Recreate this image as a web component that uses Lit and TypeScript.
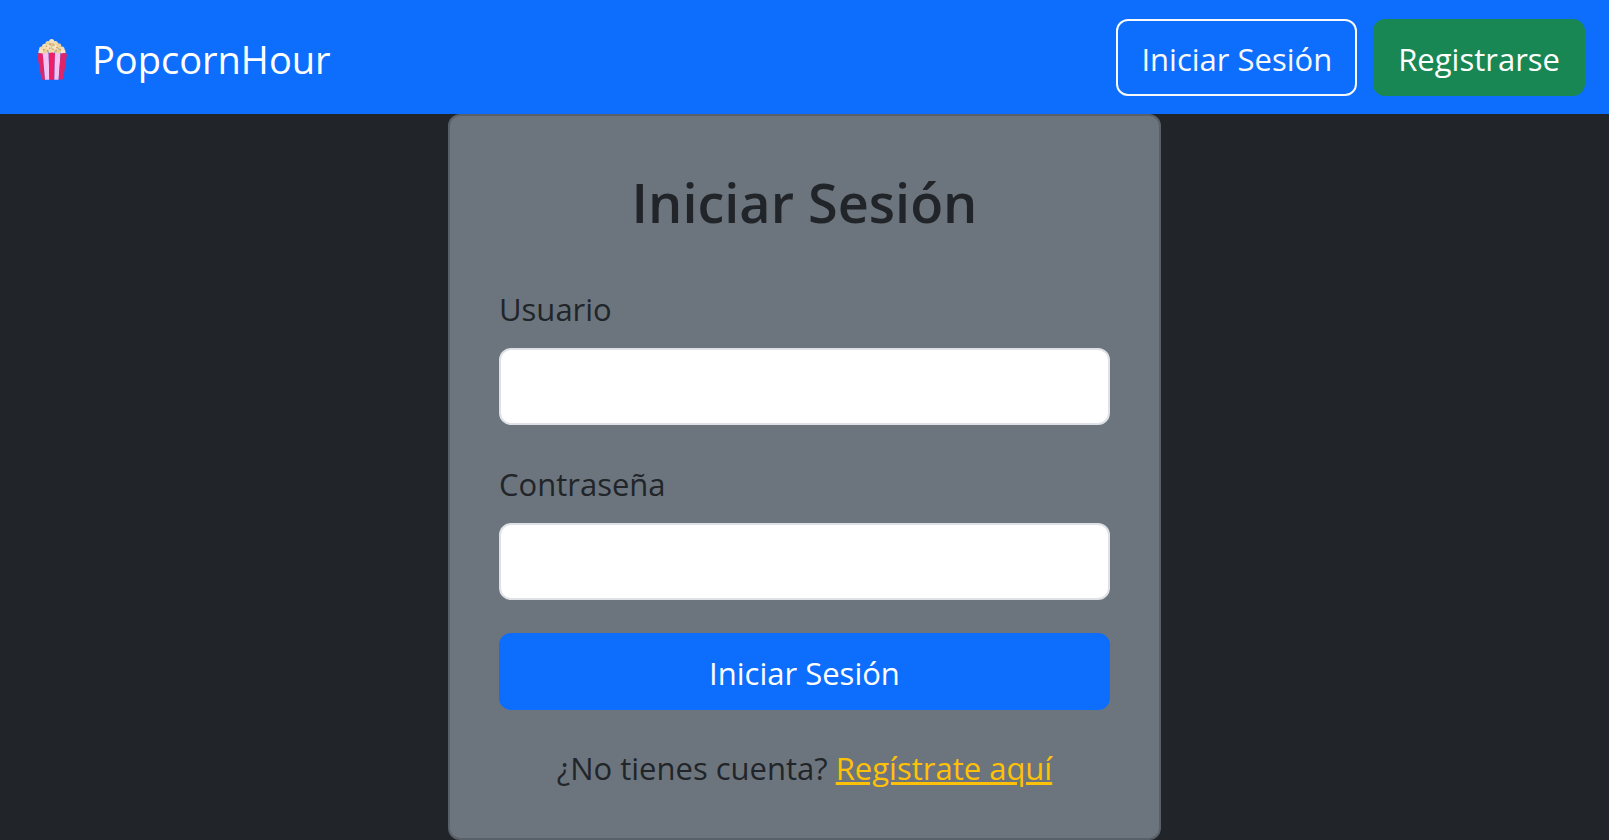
import { LitElement, html, css, svg } from "lit";
import { customElement } from "lit/decorators.js";

// Popped kernels: x, y, radius, fill.
const kernels: [number, number, number, string][] = [
  [44, 8, 8, "#f6e3bd"],
  [33, 14, 8, "#ecd3a2"],
  [55, 14, 8, "#f3dcb0"],
  [23, 22, 8, "#f4dfb6"],
  [44, 20, 9, "#e2c28c"],
  [65, 21, 8, "#ecd09c"],
  [33, 27, 9, "#f5e2bd"],
  [54, 27, 9, "#f6e5c4"],
  [14, 31, 8, "#f1d8a9"],
  [75, 31, 8, "#f3dcb0"],
  [12, 39, 8, "#f7e6c6"],
  [26, 38, 9, "#ecd09c"],
  [44, 37, 9, "#f3dbad"],
  [62, 38, 9, "#ebcf9b"],
  [78, 39, 8, "#f7e6c6"],
];

const shadows: [number, number][] = [
  [39, 15], [50, 19], [28, 22], [60, 26], [38, 28], [48, 31], [20, 33], [32, 36], [57, 36], [70, 33],
];

@customElement("popcorn-icon")
export class PopcornIcon extends LitElement {
  static styles = css`
    :host {
      display: block;
      flex: none;
    }
    .icon {
      display: block;
      width: 30px;
      height: 41px;
    }
  `;

  render() {
    return html`<svg class="icon" viewBox="0 0 90 124" aria-hidden="true">
      ${kernels.map(([x, y, r, fill]) => svg`<circle cx=${x} cy=${y} r=${r} fill=${fill} />`)}
      ${shadows.map(([x, y]) => svg`<circle cx=${x} cy=${y} r="2.5" fill="#c39b60" />`)}
      <path d="M0 47Q4 41 12 43L17 44 24 123Q15 124 13 120Z" fill="#e0246a" />
      <path d="M17 44Q26 40 35 44L37 123H24Z" fill="#f3c2f3" />
      <path d="M35 44Q44 38 54 44L52 123H37Z" fill="#ef1f63" />
      <path d="M54 44Q62 40 71 44L65 123H52Z" fill="#f3c2f3" />
      <path d="M71 44Q86 40 90 47L79 120Q76 124 65 123Z" fill="#e0246a" />
    </svg>`;
  }
}

@customElement("app-root")
export class AppRoot extends LitElement {
  static styles = css`
    :host {
      display: block;
      min-height: 100vh;
      background: #212529;
      color: #212529;
      font-family: "Segoe UI", "Open Sans", "Noto Sans", sans-serif;
      font-size: 31px;
      line-height: 53px;
    }
    *,
    *::before,
    *::after {
      box-sizing: border-box;
    }
    .navbar {
      display: flex;
      flex-wrap: wrap;
      align-items: center;
      justify-content: space-between;
      gap: 16px;
      padding: 19px 24px 18px 37px;
      background: #0d6efd;
    }
    .brand {
      display: flex;
      align-items: center;
      gap: 25px;
      padding-top: 4px;
      color: #fff;
      font-size: 38px;
      text-decoration: none;
    }
    .actions {
      display: flex;
      gap: 16px;
    }
    .btn,
    .input {
      display: block;
      padding: 12px 23px 8px;
      border: 2px solid transparent;
      border-radius: 12px;
      font: inherit;
    }
    .btn {
      color: #fff;
      text-align: center;
      cursor: pointer;
    }
    .outline {
      border-color: #f8f9fa;
      background: transparent;
      color: #f8f9fa;
    }
    .success {
      border-color: #198754;
      background: #198754;
    }
    .primary {
      width: 100%;
      border-color: #0d6efd;
      background: #0d6efd;
    }
    .card {
      max-width: 713px;
      margin: 0 auto;
      padding: 48px 49px 43px;
      border: 2px solid #596068;
      border-radius: 12px;
      background: #6c757d;
    }
    .title {
      margin: 0 0 42px;
      font-size: 54px;
      font-weight: 600;
      line-height: 77px;
      text-align: center;
    }
    .field {
      margin-bottom: 33px;
    }
    .label {
      display: block;
      margin-bottom: 12px;
    }
    .input {
      width: 100%;
      border-color: #dee2e6;
      background: #fff;
      color: #212529;
    }
    .signup {
      margin: 32px 0 0;
      text-align: center;
    }
    .link {
      color: #ffc107;
      text-decoration: underline;
    }
  `;

  render() {
    return html`
      <header class="navbar">
        <a class="brand" href="#"><popcorn-icon></popcorn-icon><span>PopcornHour</span></a>
        <nav class="actions">
          <button class="btn outline" type="button">Iniciar Sesión</button>
          <button class="btn success" type="button">Registrarse</button>
        </nav>
      </header>
      <main class="card">
        <h2 class="title">Iniciar Sesión</h2>
        <form @submit=${(e: Event) => e.preventDefault()}>
          <div class="field">
            <label class="label" for="username">Usuario</label>
            <input class="input" id="username" type="text" autocomplete="username" />
          </div>
          <div class="field">
            <label class="label" for="password">Contraseña</label>
            <input class="input" id="password" type="password" autocomplete="current-password" />
          </div>
          <button class="btn primary" type="submit">Iniciar Sesión</button>
        </form>
        <p class="signup">¿No tienes cuenta? <a class="link" href="#">Regístrate aquí</a></p>
      </main>
    `;
  }
}
